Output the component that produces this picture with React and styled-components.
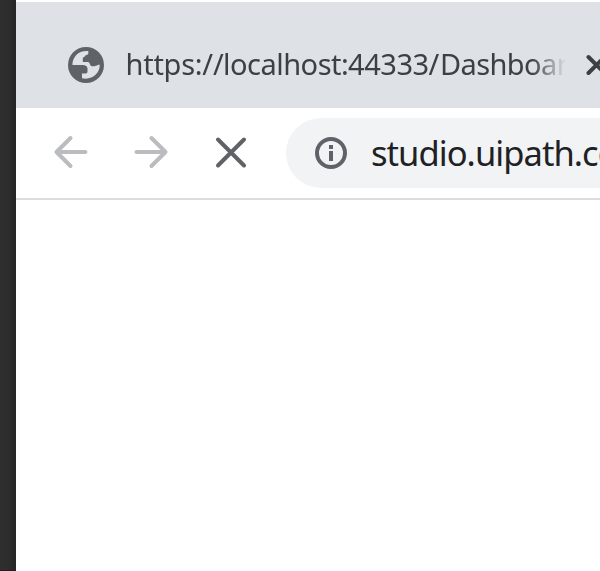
import React from "react";
import styled, { createGlobalStyle } from "styled-components";

const GlobalStyle = createGlobalStyle`
  body { margin: 0; overflow: hidden; }
`;

const Screen = styled.div`
  display: flex;
  width: 600px;
  height: 571px;
  overflow: hidden;
  background: #fff;
  font-family: "Noto Sans", "Open Sans", sans-serif;
`;

const Desktop = styled.div`
  flex: 0 0 16px;
  background: linear-gradient(90deg, #2f2f30 0, #2c2c2d 10px, #242425 16px);
  border-bottom: 1px solid #2a1d20;
  box-sizing: border-box;
`;

const Browser = styled.main`
  flex: 1;
  min-width: 0;
  padding-top: 2px;
`;

const Tab = styled.div`
  display: flex;
  align-items: center;
  height: 106px;
  box-sizing: border-box;
  padding: 20px 0 0 52px;
  background: #dee1e6;
`;

const Icon = styled.svg`
  display: block;
  flex: none;
  fill: none;
  stroke: ${(p) => p.$color};
  stroke-width: 4;
  stroke-linecap: round;
  stroke-linejoin: round;
`;

const Title = styled.div`
  display: flex;
  width: 440px;
  margin: 0 19px 2px 20.5px;
  flex: none;
  white-space: nowrap;
  color: #3c4043;
  font-size: 29px;
  line-height: 42px;
  -webkit-mask-image: linear-gradient(90deg, #000 406px, transparent 440px);
  mask-image: linear-gradient(90deg, #000 406px, transparent 440px);
`;

const Part = styled.span`
  flex: none;
  letter-spacing: ${(p) => p.$track}px;
  width: ${(p) => p.$width}px;
`;

const Toolbar = styled.nav`
  display: flex;
  align-items: center;
  height: 92px;
  box-sizing: border-box;
  padding-left: 37px;
  border-bottom: 2px solid #dadce0;
`;

const NavButtons = styled.div`
  display: flex;
  gap: 44px;
  margin-right: 37px;
  padding-bottom: 2px;
`;

const Address = styled.div`
  display: flex;
  align-items: center;
  flex: 1;
  min-width: 0;
  height: 70px;
  padding-left: 29px;
  box-sizing: border-box;
  border-radius: 35px 0 0 35px;
  background: #f1f3f4;
`;

const Url = styled.div`
  flex: 1;
  margin-left: 24px;
  min-width: 0;
  white-space: nowrap;
  color: #202124;
  font-size: 34.5px;
  line-height: 50px;
  letter-spacing: -0.95px;
`;

export default function App() {
  return (
    <Screen>
      <GlobalStyle />
      <Desktop />
      <Browser>
        <Tab>
          <Icon width="37" height="36" viewBox="0 0 37 36" $color="none">
            <circle cx="18" cy="18" r="18" fill="#5f6368" />
            <path
              d="M20.3 4V6.3C20.3 8.3 17.2 7.8 16.6 9.7L14.8 10.8V15H20.2C22 15 21.5 19.2 24 19.2H26.5C29 19.2 28.2 17.8 31.8 17.8C31.8 26.5 24 33.5 14 31.3V26.5H17.5C19.2 26.5 19.5 25.5 19.5 24V21.7C19.5 19.2 17.5 18 14.7 18H4.4C4.4 9.5 11 3 20.3 4Z"
              fill="#dee1e6"
            />
          </Icon>
          <Title>
            <Part $width={97.5} $track={-0.25}>https://</Part>
            <Part $width={125} $track={-0.5}>localhost:</Part>
            <Part $width={80.5} $track={-0.45}>44333</Part>
            <Part $width={11.5} $track={0}>/</Part>
            <Part $width={125.5} $track={-0.6}>Dashboar</Part>
          </Title>
          <Icon width="24" height="24" viewBox="0 0 24 24" $color="#3c4043">
            <path d="M3.5 4L19.5 20M19.5 4L3.5 20" />
          </Icon>
        </Tab>
        <Toolbar>
          <NavButtons>
            <Icon width="36" height="36" viewBox="0 0 36 36" $color="#babcc0">
              <path d="M32.5 18H4M17.5 4L3.5 18L17.5 32" />
            </Icon>
            <Icon width="36" height="36" viewBox="0 0 36 36" $color="#babcc0">
              <path d="M3.5 18H32M18.5 4L32.5 18L18.5 32" />
            </Icon>
            <Icon width="36" height="36" viewBox="0 0 36 36" $color="#5f6368">
              <path d="M5 5.5L31 31.5M31 5.5L5 31.5" />
            </Icon>
          </NavButtons>
          <Address>
            <Icon width="32" height="32" viewBox="0 0 32 32" $color="#5f6368">
              <circle cx="16" cy="16" r="14" />
              <path d="M14 8H18V12H14ZM14 14H18V24H14Z" fill="#5f6368" stroke="none" />
            </Icon>
            <Url>studio.uipath.co</Url>
          </Address>
        </Toolbar>
      </Browser>
    </Screen>
  );
}
